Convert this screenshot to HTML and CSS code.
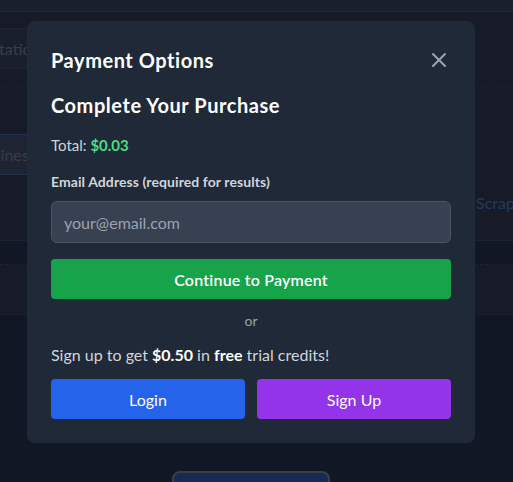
FILE: index.html
```html
<!DOCTYPE html>
<html lang="en">
<head>
  <meta charset="UTF-8">
  <meta name="viewport" content="width=device-width, initial-scale=1.0">
  <title>Payment Options</title>
  <link rel="stylesheet" href="styles.css">
</head>
<body>
  <header class="topbar"></header>

  <main class="page">
    <div class="search-row">
      <div class="search-box">Documentation</div>
    </div>
    <div class="dashed"></div>

    <div class="tab-row">
      <div class="tab">Pipelines</div>
    </div>

    <div class="link-row">
      <span class="link">Scraper</span>
    </div>

    <div class="table-head"></div>
    <div class="table-row"></div>

    <div class="bottom-row">
      <button type="button" class="ghost-btn"></button>
    </div>
  </main>

  <div class="overlay">
    <div class="modal">
      <div class="modal-header">
        <h2>Payment Options</h2>
        <button type="button" class="close-btn" aria-label="Close">
          <svg width="24" height="24" viewBox="0 0 24 24" fill="none" stroke="currentColor" stroke-width="2" stroke-linecap="round">
            <path d="M6 18L18 6M6 6l12 12"/>
          </svg>
        </button>
      </div>

      <h3>Complete Your Purchase</h3>
      <p class="total">Total: <span class="amount">$0.03</span></p>

      <label for="email" class="field-label">Email Address (required for results)</label>
      <input type="email" id="email" class="email-input" placeholder="your@email.com">

      <button type="button" class="btn btn-green">Continue to Payment</button>

      <div class="divider">or</div>

      <p class="promo">Sign up to get <strong>$0.50</strong> in <strong>free</strong> trial credits!</p>

      <div class="auth-buttons">
        <button type="button" class="btn btn-blue">Login</button>
        <button type="button" class="btn btn-purple">Sign Up</button>
      </div>
    </div>
  </div>
</body>
</html>
```

FILE: styles.css
```css
* {
  box-sizing: border-box;
}
body {
  margin: 0;
  background-color: #242f4c;
  font-family: Lato, "Noto Sans", sans-serif;
  color: #fff;
  overflow: hidden;
  height: 482px;
}

/* page behind the modal (seen through a dark overlay) */
.topbar {
  height: 12px;
  background-color: #343e5a;
  border-bottom: 1px solid #46506a;
}
.page {
  background-color: #2c364f;
}
.search-row {
  padding-top: 16px;
}
.search-box {
  width: 300px;
  height: 41px;
  margin-left: -81px;
  padding: 10px 12px;
  background-color: #343f5c;
  border-top: 1px solid #3e4862;
  border-bottom: 1px solid #3e4862;
  color: #727b8e;
  font-size: 16px;
}
.dashed {
  margin-top: 17px;
  border-top: 1px dashed #3a4460;
}
.tab-row {
  padding-top: 47px;
}
.tab {
  width: 200px;
  height: 41px;
  margin-left: -46px;
  padding: 10px 12px;
  background-color: #3c4864;
  border-top: 1px solid #45659a;
  border-bottom: 1px solid #45659a;
  color: #727b8e;
  font-size: 16px;
}
.link-row {
  padding: 18px 0 0 476px;
  height: 65px;
  white-space: nowrap;
}
.link {
  color: #4672be;
  font-size: 16px;
}
.table-head {
  height: 25px;
  background-color: #242e4a;
  border-top: 1px solid #3a4460;
  border-bottom: 1px dashed #3a4460;
}
.table-row {
  height: 50px;
  border-bottom: 1px dashed #3a4460;
}
.bottom-row {
  background-color: #242f4c;
  display: flex;
  justify-content: center;
  padding: 156px 12px 0 0;
}
.ghost-btn {
  width: 158px;
  height: 40px;
  background-color: #2e54aa;
  border: 2px solid #757d8c;
  border-radius: 8px;
}

/* modal */
.overlay {
  position: fixed;
  top: 0;
  left: 0;
  right: 0;
  bottom: 0;
  background-color: rgba(0, 0, 0, 0.5);
  padding: 21px 0 0 27px;
}
.modal {
  width: 448px;
  background-color: #1f2937;
  border-radius: 8px;
  padding: 24px;
}
.modal-header {
  display: flex;
  align-items: center;
  justify-content: space-between;
  margin-bottom: 16px;
}
h2, h3 {
  margin: 0;
  padding-top: 1px;
  font-size: 20px;
  line-height: 28px;
  font-weight: 700;
  letter-spacing: 0.55px;
}
h3 {
  margin-bottom: 16px;
}
.close-btn {
  background: none;
  border: none;
  padding: 0;
  color: #9ca3af;
  display: flex;
  cursor: pointer;
}
.total {
  margin: 0 0 17px 0;
  font-size: 15px;
  line-height: 20px;
  color: #d1d5db;
}
.amount {
  color: #4ade80;
  font-weight: 700;
}
.field-label {
  display: block;
  font-size: 14px;
  line-height: 20px;
  font-weight: 700;
  letter-spacing: 0.08px;
  color: #d1d5db;
  margin-bottom: 9px;
}
.email-input {
  display: block;
  width: 100%;
  height: 42px;
  padding: 8px 12px;
  background-color: #374151;
  border: 1px solid #4b5563;
  border-radius: 6px;
  color: #fff;
  font-family: inherit;
  font-size: 16px;
  line-height: 24px;
  margin-bottom: 16px;
}
.email-input::placeholder {
  color: #9ca3af;
}
.btn {
  display: block;
  width: 100%;
  height: 40px;
  border: none;
  border-radius: 4px;
  color: #fff;
  font-family: inherit;
  font-size: 16px;
  cursor: pointer;
}
.btn-green {
  background-color: #16a34a;
  font-weight: 600;
  letter-spacing: 0.2px;
}
.divider {
  text-align: center;
  color: #9ca3af;
  font-size: 14px;
  line-height: 20px;
  margin: 12px 0;
}
.promo {
  margin: 0 0 12px 0;
  font-size: 16px;
  line-height: 24px;
  color: #d1d5db;
}
.promo strong {
  color: #fff;
}
.auth-buttons {
  display: flex;
  gap: 12px;
}
.btn-blue {
  background-color: #2563eb;
}
.btn-purple {
  background-color: #9333ea;
}
```
